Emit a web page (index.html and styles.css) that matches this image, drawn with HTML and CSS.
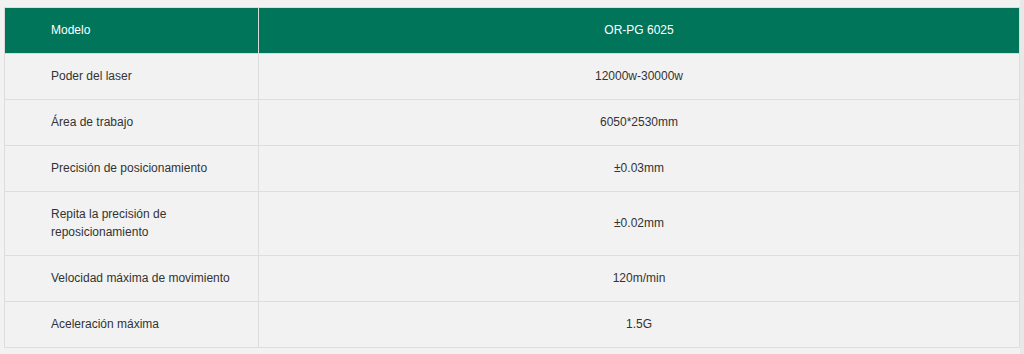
FILE: index.html
```html
<!DOCTYPE html>
<html lang="es">
<head>
<meta charset="utf-8">
<title>OR-PG 6025</title>
<link rel="stylesheet" href="styles.css">
</head>
<body>
<div class="page">
  <table class="specs">
    <colgroup>
      <col class="col-label">
      <col class="col-value">
    </colgroup>
    <thead>
      <tr>
        <th class="label">Modelo</th>
        <th class="value">OR-PG 6025</th>
      </tr>
    </thead>
    <tbody>
      <tr><td class="label">Poder del laser</td><td class="value">12000w-30000w</td></tr>
      <tr><td class="label">Área de trabajo</td><td class="value">6050*2530mm</td></tr>
      <tr><td class="label">Precisión de posicionamiento</td><td class="value">±0.03mm</td></tr>
      <tr><td class="label">Repita la precisión de reposicionamiento</td><td class="value">±0.02mm</td></tr>
      <tr><td class="label">Velocidad máxima de movimiento</td><td class="value">120m/min</td></tr>
      <tr><td class="label">Aceleración máxima</td><td class="value">1.5G</td></tr>
    </tbody>
  </table>
</div>
</body>
</html>
```
FILE: styles.css
```css
html, body {
  margin: 0;
  padding: 0;
  background: #e8e8e8;
}
.page {
  width: 1020px;
  height: 354px;
  box-sizing: border-box;
  padding: 7px 0 0 4px;
  background: #f2f2f2;
  font-family: "Liberation Sans", Arial, Helvetica, sans-serif;
  font-size: 12px;
  color: #333;
}
.specs {
  width: 1016px;
  border-collapse: collapse;
  table-layout: fixed;
  border: 1px solid #dddddd;
}
.col-label { width: 254px; }
.specs th, .specs td {
  border: 1px solid #dddddd;
  line-height: 18px;
  padding: 13px 16px 14px 46px;
  vertical-align: middle;
  font-weight: normal;
}
.specs .value { padding: 13px 16px 14px; }
.specs th {
  background: #01755a;
  color: #ffffff;
  border-color: #d7dcd9;
  border-top-color: #dddddd;
}
.specs td { background: #f2f2f2; }
.specs .label { text-align: left; }
.specs .value { text-align: center; }
```
